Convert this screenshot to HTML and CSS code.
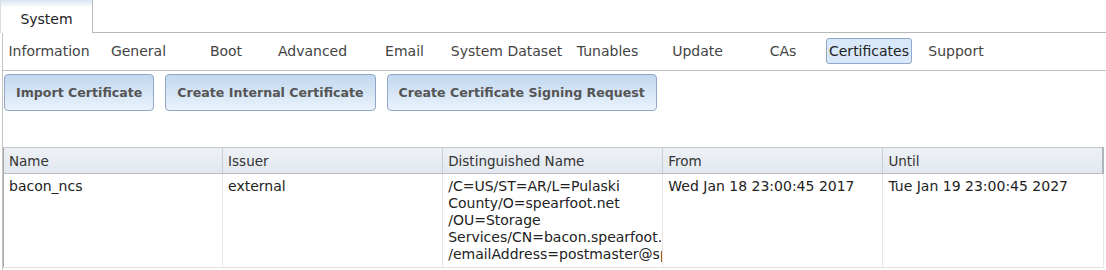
FILE: index.html
```html
<!DOCTYPE html>
<html>
<head>
<meta charset="utf-8">
<link rel="stylesheet" href="styles.css">
</head>
<body>
<div class="tabbar">
  <div class="tab active">System</div>
  <div class="tabfill"></div>
</div>
<div class="panel">
  <nav class="subtabs">
    <span class="sub">Information</span>
    <span class="sub">General</span>
    <span class="sub">Boot</span>
    <span class="sub">Advanced</span>
    <span class="sub">Email</span>
    <span class="sub">System Dataset</span>
    <span class="sub">Tunables</span>
    <span class="sub">Update</span>
    <span class="sub">CAs</span>
    <span class="sub selected">Certificates</span>
    <span class="sub">Support</span>
  </nav>
  <div class="actions">
    <button class="btn">Import Certificate</button>
    <button class="btn">Create Internal Certificate</button>
    <button class="btn">Create Certificate Signing Request</button>
  </div>
  <table class="grid">
    <colgroup>
      <col class="c1"><col class="c2"><col class="c3"><col class="c4"><col class="c5">
    </colgroup>
    <thead>
      <tr><th>Name</th><th>Issuer</th><th>Distinguished Name</th><th>From</th><th>Until</th></tr>
    </thead>
    <tbody>
      <tr>
        <td>bacon_ncs</td>
        <td>external</td>
        <td class="dn">/C=US/ST=AR/L=Pulaski County/O=spearfoot.net<br>/OU=Storage Services/CN=bacon.spearfoot.net<br>/emailAddress=postmaster@spearfoot.net</td>
        <td>Wed Jan 18 23:00:45 2017</td>
        <td>Tue Jan 19 23:00:45 2027</td>
      </tr>
    </tbody>
  </table>
</div>
</body>
</html>
```
FILE: styles.css
```css
* { box-sizing: border-box; }
html, body { margin: 0; padding: 0; background: #fff; }
body {
  font-family: "DejaVu Sans", Verdana, sans-serif;
  font-size: 14px;
  color: #333;
  width: 1106px;
  height: 270px;
  overflow: hidden;
}

.tabbar { display: flex; height: 33px; }
.tab {
  width: 93px;
  height: 33px;
  border-left: 1px solid #d8dde3;
  border-right: 1px solid #b9b9b9;
  background: linear-gradient(#d7e4f2 0, #eef3f9 4px, #fff 8px);
  color: #222;
  display: flex;
  align-items: center;
  justify-content: center;
  padding-top: 4px;
}
.tabfill { flex: 1; height: 33px; border-bottom: 1px solid #b9b9b9; }

.panel { margin-left: 2px; border-left: 1px solid #c4c4c4; height: 237px; }

.subtabs {
  display: grid;
  grid-template-columns: 90px 89px 86px 87px 97px 107px 95px 85px 86px 86px 88px;
  padding: 5px 0 6px 1px;
  height: 38px;
  border-bottom: 1px solid #bdbdbd;
}
.sub {
  height: 26px;
  display: flex;
  align-items: center;
  justify-content: center;
  color: #444;
  border: 1px solid transparent;
  border-radius: 3px;
  white-space: nowrap;
  padding-bottom: 1px;
}
.sub.selected {
  background: #d9e8f9;
  border-color: #8ea9cc;
  color: #222;
}

.actions {
  display: flex;
  gap: 11px;
  padding: 3px 0 0 1px;
  height: 76px;
}
.btn {
  font-family: inherit;
  font-size: 12.6px;
  font-weight: bold;
  color: #555;
  height: 37px;
  padding: 0 11px;
  border: 1px solid #8fa7c4;
  border-radius: 4px;
  background: linear-gradient(#c2d8ef, #e9f2fc);
  white-space: nowrap;
}

.grid {
  table-layout: fixed;
  border-collapse: collapse;
  width: 1101px;
  border-left: 1px solid #a9a9a9;
}
.c1 { width: 219px; }
.c2, .c3, .c4, .c5 { width: 220px; }
.grid th {
  height: 26px;
  font-size: 13.5px;
  font-weight: normal;
  text-align: left;
  color: #333;
  padding: 0 5px;
  background: linear-gradient(#edf1f6, #e2e8ef);
  border-top: 1px solid #c4c8cd;
  border-bottom: 1px solid #b8bec6;
  border-right: 1px solid #c9ced5;
}
.grid th:last-child { border-right: 2px solid #b0b5bb; }
.grid td {
  vertical-align: top;
  padding: 4px 5px 4px 5px;
  line-height: 17px;
  height: 93px;
  color: #222;
  border-right: 1px solid #ebe6dd;
  border-bottom: 1px solid #e6e0d6;
  overflow: hidden;
  white-space: nowrap;
}
.grid td.dn { white-space: normal; overflow-wrap: normal; word-break: normal; }
```
